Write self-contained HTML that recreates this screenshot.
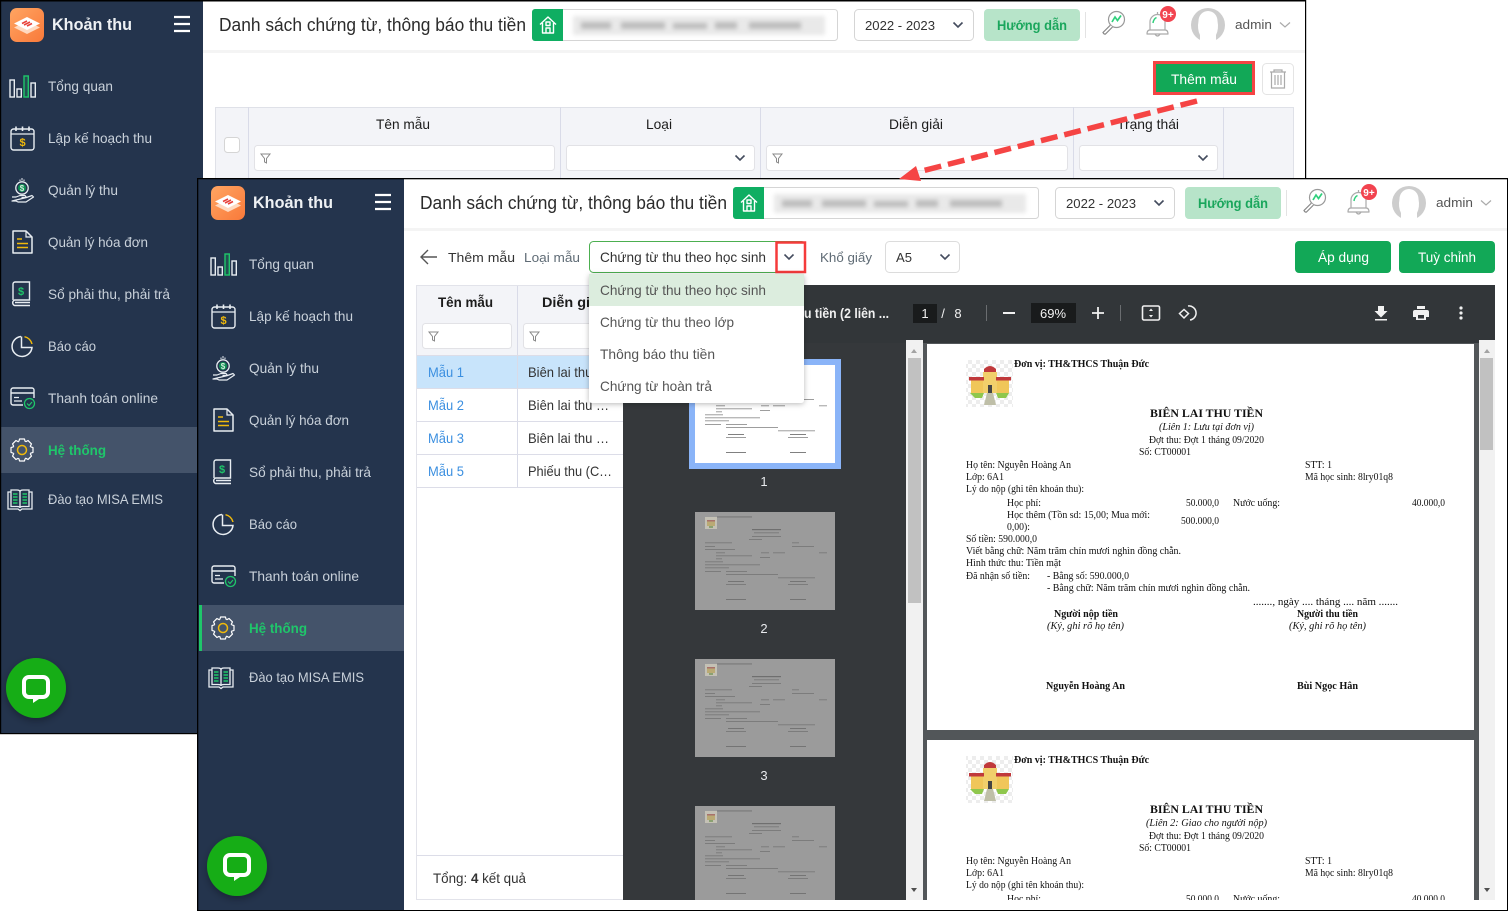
<!DOCTYPE html>
<html lang="vi"><head><meta charset="utf-8"><title>Khoản thu</title>
<style>
html,body{margin:0;padding:0;background:#fff;width:1508px;height:911px;overflow:hidden}
svg{display:block;font-family:"Liberation Sans","Noto Sans CJK SC",sans-serif}
.nav{font-size:14px;fill:#c9d1da}
.act{font-size:14px;fill:#1fc66a;font-weight:bold}
.brand{font-size:17px;fill:#eef1f4;font-weight:bold}
.title{font-size:18px;fill:#2b2b2b}
.t13{font-size:13px;fill:#333}
.t14{font-size:14px;fill:#333}
.th{font-size:14px;fill:#1c1c1c}
.gr{font-size:14px;fill:#1aa65c;font-weight:bold}
.wh{font-size:14px;fill:#fff}
.lk{font-size:14px;fill:#3b8fe0}
.dd{font-size:14px;fill:#555}
.pt{font-size:13px;fill:#f1f1f1}
.d{font-family:"Liberation Serif","Noto Serif CJK SC",serif;font-size:10px;fill:#111}
.db{font-family:"Liberation Serif","Noto Serif CJK SC",serif;font-size:10px;fill:#111;font-weight:bold}
.di{font-family:"Liberation Serif","Noto Serif CJK SC",serif;font-size:10px;fill:#111;font-style:italic}
.dt{font-family:"Liberation Serif","Noto Serif CJK SC",serif;font-size:12px;fill:#111;font-weight:bold}
</style></head><body>
<svg width="1508" height="911" viewBox="0 0 1508 911" xmlns="http://www.w3.org/2000/svg">
<defs>
<filter id="bl" x="-10%" y="-60%" width="120%" height="220%"><feGaussianBlur stdDeviation="3"/></filter>
<filter id="bl2" x="-10%" y="-100%" width="120%" height="300%"><feGaussianBlur stdDeviation="2.200"/></filter>
<filter id="mb" x="-5%" y="-5%" width="110%" height="110%"><feGaussianBlur stdDeviation=".3"/></filter>
<filter id="sh" x="-20%" y="-20%" width="140%" height="150%"><feDropShadow dx="0" dy="1" stdDeviation="3" flood-color="#000" flood-opacity=".28"/></filter>
<filter id="sh2" x="-30%" y="-30%" width="160%" height="160%"><feDropShadow dx="0" dy="3" stdDeviation="4" flood-color="#000" flood-opacity=".3"/></filter>
<linearGradient id="og" x1="0" y1="0" x2="1" y2="1"><stop offset="0" stop-color="#ffa562"/><stop offset="1" stop-color="#f9793a"/></linearGradient>
<clipPath id="cp"><rect x="623" y="340" width="872" height="560"/></clipPath>
<pattern id="chk" width="8" height="8" patternUnits="userSpaceOnUse"><rect width="8" height="8" fill="#fff"/><rect width="4" height="4" fill="#ededed"/><rect x="4" y="4" width="4" height="4" fill="#ededed"/></pattern>

<g id="tooth"><path d="M-3.2 -8.6L-2.4 -11H2.4L3.2 -8.6L3.8 -8.2" fill="none" stroke="#fff" stroke-width="1.2" stroke-linejoin="round"/></g>
<g id="ic-logo"><rect width="34" height="34" rx="7" fill="url(#og)"/><path d="M17 13L30 19.5L17 26L4 19.5Z" fill="#ffd9c0"/><path d="M17 9L30 15.5L17 22L4 15.5Z" fill="#fff"/><path d="M12 15.5L17 13M17 18L22 15.5M14 17L20 14" stroke="#e8413a" stroke-width="1.6" fill="none"/></g>
<g id="ic-burger"><path d="M0 1H16M0 8H16M0 15H16" stroke="#fff" stroke-width="2.2"/></g>
<g id="ic-bars" fill="none" stroke-width="1.4"><rect x="1" y="5" width="4.3" height="17" stroke="#e8edf2"/><rect x="8" y="14" width="4.3" height="8" stroke="#e8edf2"/><rect x="15" y="1" width="4.3" height="21" stroke="#1fc66a" fill="#1fc66a" fill-opacity=".2"/><rect x="22" y="8" width="4.3" height="14" stroke="#e8edf2"/></g>
<g id="ic-cal"><rect x="1" y="3" width="23" height="21" rx="2.5" fill="none" stroke="#e8edf2" stroke-width="1.4"/><path d="M1 8H24" stroke="#e8edf2" stroke-width="1.2"/><path d="M6 0.5V5M12.5 0.5V5M19 0.5V5" stroke="#e8edf2" stroke-width="1.6"/><text x="12.5" y="20" text-anchor="middle" font-size="11" font-weight="bold" fill="#f0b90b">$</text></g>
<g id="ic-hand"><circle cx="11" cy="10" r="6.2" fill="none" stroke="#e8edf2" stroke-width="1.3"/><circle cx="11" cy="10" r="4" fill="#0b8f52"/><text x="11" y="13" text-anchor="middle" font-size="8" font-weight="bold" fill="#cfead9">$</text><path d="M9 1.5V3M13 1.5V3M11 0V2.5" stroke="#e8edf2" stroke-width="1"/><path d="M1 19H5L9 17.5H14L15.5 19.5H10.5M15.5 19.5L21 17.5L22.5 19L15 24H7L5 23H1Z" fill="none" stroke="#e8edf2" stroke-width="1.2" stroke-linejoin="round"/></g>
<g id="ic-doc"><path d="M1 1H14L20 7V23H1Z" fill="none" stroke="#e8edf2" stroke-width="1.5" stroke-linejoin="round"/><path d="M14 1V7H20" fill="none" stroke="#e8edf2" stroke-width="1.2"/><path d="M5 9H10M5 13.5H16M5 17.5H16" stroke="#f0b90b" stroke-width="1.5"/></g>
<g id="ic-book"><path d="M3 19V3A2 2 0 0 1 5 1H19.5V19H4.5A3 3 0 0 0 4.500 24.500H20M5 21.500H20" fill="none" stroke="#e8edf2" stroke-width="1.4"/><text x="11" y="14" text-anchor="middle" font-size="11" font-weight="bold" fill="#1fc66a">$</text></g>
<g id="ic-pie" fill="none" stroke-width="1.5"><path d="M10 1.500A10 10 0 1 0 21 12.500H10.500V1.500" stroke="#e8edf2"/><path d="M13.500 1.700A10 10 0 0 1 21 9" stroke="#f0b90b"/></g>
<g id="ic-card" fill="none"><path d="M13 18H3A2 2 0 0 1 1 16V3A2 2 0 0 1 3 1H22A2 2 0 0 1 24 3V11" stroke="#e8edf2" stroke-width="1.4"/><path d="M1 6H24" stroke="#e8edf2" stroke-width="1.4"/><path d="M4 10.500H9M4 14H12" stroke="#e8edf2" stroke-width="1.2"/><circle cx="19.500" cy="16.500" r="5" stroke="#1fc66a" stroke-width="1.3"/><path d="M17 16.500L19 18.500L22 15" stroke="#1fc66a" stroke-width="1.2"/></g>
<g id="ic-gear"><use href="#tooth"/><use href="#tooth" transform="rotate(45)"/><use href="#tooth" transform="rotate(90)"/><use href="#tooth" transform="rotate(135)"/><use href="#tooth" transform="rotate(180)"/><use href="#tooth" transform="rotate(225)"/><use href="#tooth" transform="rotate(270)"/><use href="#tooth" transform="rotate(315)"/><circle r="4.500" fill="none" stroke="#f0b90b" stroke-width="1.500"/></g>
<g id="ic-open" fill="none"><path d="M3.500 3H1V20H11L13 21.500L15 20H25V3H22.500" stroke="#e8edf2" stroke-width="1.3"/><path d="M4 1H10Q13 1 13 3V19Q13 17.500 10 17.500H4ZM22 1H16Q13 1 13 3V19Q13 17.500 16 17.500H22Z" stroke="#e8edf2" stroke-width="1.3"/><path d="M6 5H10.500M6 8H10.500M6 11H10.500M6 14H10.500M15.500 5H20M15.500 8H20M15.500 11H20M15.500 14H20" stroke="#1fc66a" stroke-width="1.600"/></g>
<g id="ic-chat"><rect x="0" y="0" width="24" height="20" rx="5" fill="none" stroke="#fff" stroke-width="4"/><path d="M9 19L9 26L18 20Z" fill="#fff"/></g>
<g id="ic-home" fill="none" stroke="#fff" stroke-width="1.400" stroke-linejoin="round"><path d="M1 9.500L9 2L17 9.500M3.500 8V18H14.500V8"/><rect x="7" y="7" width="4" height="3.500"/><path d="M7 18V13H11V18"/></g>
<g id="ic-search" fill="none"><circle cx="15.500" cy="9.500" r="8" stroke="#999" stroke-width="1.200"/><path d="M11 12L14 7L16.500 10.500L20 5.500" stroke="#2fd07c" stroke-width="1.700"/><path d="M9.500 15L2 22.500Q3 24.500 4.500 24L11.500 17" fill="#fff" stroke="#888" stroke-width="1.200"/></g>
<g id="ic-bell" fill="none"><path d="M5 20V12A7.500 7.500 0 0 1 20 12V20" stroke="#aaa" stroke-width="1.200"/><path d="M2 24Q2 20 5 20H20Q23 20 23 24H2Z" stroke="#aaa" stroke-width="1.200" stroke-linejoin="round"/><path d="M10 24Q12.500 28 15 24M12.500 4.500V2" stroke="#aaa" stroke-width="1.200"/><path d="M8 13Q8.500 9 11.500 7.500" stroke="#2fd07c" stroke-width="1.500"/></g>
<g id="ic-chev"><path d="M-4.500 -2.500L0 2L4.500 -2.500" fill="none" stroke="#444c5e" stroke-width="1.600"/></g>
<g id="ic-chevl"><path d="M-5 -2.500L0 2L5 -2.500" fill="none" stroke="#aaa" stroke-width="1.200"/></g>
<g id="ic-fun"><path d="M0 0H9L5.500 4.500V9L3.500 8V4.500Z" fill="none" stroke="#888" stroke-width="1"/></g>
<g id="ava"><circle r="17" fill="#cdcdcd"/><path d="M-8 17V10Q-11 4 -9.500 -4A9.500 10 0 0 1 9.500 -4Q11 4 8 10V17Z" fill="#fff"/></g>
<g id="blurbox"><rect x="0" y="0" width="252" height="19" fill="#e9e9e9" filter="url(#bl2)"/><g fill="#bdbdbd" filter="url(#bl2)"><rect x="8" y="6" width="30" height="7"/><rect x="48" y="6" width="44" height="7"/><rect x="100" y="7" width="34" height="6"/><rect x="142" y="6" width="22" height="7"/><rect x="176" y="6" width="52" height="7"/></g></g>

<g id="mini" filter="url(#mb)">
<rect x="10" y="5" width="12" height="12" fill="#eee8d0"/><rect x="12" y="9" width="8" height="5" fill="#d9b94f"/><rect x="12" y="8" width="8" height="1.500" fill="#b54a3c"/><rect x="14" y="14" width="4" height="2" fill="#7aa84a"/>
<g fill="#444"><rect x="22" y="4.500" width="35" height=".9"/><rect x="57" y="17" width="29" height="1.200"/><rect x="59" y="20.500" width="25" height=".7"/><rect x="57" y="24" width="29" height=".7"/><rect x="54" y="27" width="13" height=".7"/>
<rect x="10" y="30.500" width="27" height=".7"/><rect x="97" y="30.500" width="7" height=".7"/><rect x="10" y="34" width="10" height=".7"/><rect x="97" y="34" width="22" height=".7"/><rect x="10" y="37" width="30" height=".7"/>
<rect x="21" y="40.500" width="9" height=".7"/><rect x="66" y="40.500" width="8" height=".7"/><rect x="78" y="40.500" width="12" height=".7"/><rect x="124" y="40.500" width="8" height=".7"/><rect x="21" y="43.500" width="36" height=".7"/><rect x="65" y="45" width="10" height=".7"/><rect x="21" y="46.500" width="6" height=".7"/>
<rect x="10" y="49.500" width="18" height=".7"/><rect x="10" y="52.500" width="55" height=".7"/><rect x="10" y="55.500" width="24" height=".7"/><rect x="10" y="59" width="16" height=".7"/><rect x="31" y="59" width="21" height=".7"/><rect x="31" y="62" width="52" height=".7"/>
<rect x="83" y="65.500" width="37" height=".7"/><rect x="33" y="69" width="16" height=".9"/><rect x="95" y="69" width="16" height=".9"/><rect x="31" y="72" width="20" height=".7"/><rect x="93" y="72" width="20" height=".7"/><rect x="31" y="87" width="20" height=".9"/><rect x="95" y="87" width="16" height=".9"/></g>
</g>
</defs>

<rect width="1508" height="911" fill="#fff"/>

<!-- WINDOW 1 -->
<rect x="1" y="1" width="202" height="732" fill="#24344d"/>
<rect x="203" y="1" width="1102" height="49" fill="#fff"/>
<rect x="203" y="50" width="1102" height="3" fill="#f4f4f4"/>
<use href="#ic-logo" x="10" y="8"/>
<text class="brand" x="52" y="30" textLength="80" lengthAdjust="spacingAndGlyphs">Khoản thu</text>
<use href="#ic-burger" x="174" y="16"/>
<use href="#ic-bars" x="9" y="75"/>
<use href="#ic-cal" x="10" y="126"/>
<use href="#ic-hand" x="11" y="178"/>
<use href="#ic-doc" x="12" y="230"/>
<use href="#ic-book" x="10" y="281"/>
<use href="#ic-pie" x="11" y="335"/>
<use href="#ic-card" x="10" y="387"/>
<rect x="1" y="427" width="196" height="46" fill="#44536a"/>
<use href="#ic-gear" x="22" y="450"/>
<use href="#ic-open" x="7" y="489"/>
<text class="nav" x="48" y="91" textLength="65" lengthAdjust="spacingAndGlyphs">Tổng quan</text>
<text class="nav" x="48" y="143" textLength="104" lengthAdjust="spacingAndGlyphs">Lập kế hoạch thu</text>
<text class="nav" x="48" y="195" textLength="70" lengthAdjust="spacingAndGlyphs">Quản lý thu</text>
<text class="nav" x="48" y="247" textLength="100" lengthAdjust="spacingAndGlyphs">Quản lý hóa đơn</text>
<text class="nav" x="48" y="299" textLength="122" lengthAdjust="spacingAndGlyphs">Sổ phải thu, phải trả</text>
<text class="nav" x="48" y="351" textLength="48" lengthAdjust="spacingAndGlyphs">Báo cáo</text>
<text class="nav" x="48" y="403" textLength="110" lengthAdjust="spacingAndGlyphs">Thanh toán online</text>
<text class="act" x="48" y="455" textLength="58" lengthAdjust="spacingAndGlyphs">Hệ thống</text>
<text class="nav" x="48" y="504" textLength="115" lengthAdjust="spacingAndGlyphs">Đào tạo MISA EMIS</text>
<circle cx="36" cy="688" r="30" fill="#17ad17" filter="url(#sh2)"/>
<use href="#ic-chat" x="24" y="677"/>

<text class="title" x="219" y="31" textLength="307" lengthAdjust="spacingAndGlyphs">Danh sách chứng từ, thông báo thu tiền</text>
<rect x="532.500" y="9.500" width="305" height="31" rx="3" fill="#fff" stroke="#d5d5d5"/>
<path d="M535 9H563V41H535A3 3 0 0 1 532 38V12A3 3 0 0 1 535 9Z" fill="#0fae62"/>
<use href="#ic-home" x="539" y="15"/>
<use href="#blurbox" x="573" y="16"/>
<rect x="854.500" y="9.500" width="119" height="31" rx="4" fill="#fff" stroke="#d5d5d5"/>
<text class="t13" x="865" y="30" textLength="70" lengthAdjust="spacingAndGlyphs">2022 - 2023</text>
<use href="#ic-chev" x="958" y="25"/>
<rect x="984" y="9" width="96" height="32" rx="4" fill="#b7e4c9"/>
<text class="gr" x="997" y="30" textLength="70" lengthAdjust="spacingAndGlyphs">Hướng dẫn</text>
<rect x="1085" y="12" width="1" height="26" fill="#e3e3e3"/>
<use href="#ic-search" x="1101" y="10"/>
<use href="#ic-bell" x="1145" y="10"/>
<circle cx="1168" cy="14" r="8" fill="#f2434f"/><text x="1168" y="18" text-anchor="middle" font-size="10" font-weight="bold" fill="#fff">9+</text>
<use href="#ava" x="1208" y="25"/>
<text class="t13" x="1235" y="29" textLength="37" lengthAdjust="spacingAndGlyphs" style="fill:#555">admin</text>
<use href="#ic-chevl" x="1285" y="25"/>

<rect x="1154.500" y="62.500" width="99" height="31" fill="#12a857" stroke="#f54444" stroke-width="3"/>
<text class="wh" x="1171" y="84" textLength="66" lengthAdjust="spacingAndGlyphs">Thêm mẫu</text>
<rect x="1262.500" y="63.500" width="31" height="31" rx="4" fill="#fff" stroke="#e4e4e4"/>
<g fill="none" stroke="#aaa" stroke-width="1.200"><path d="M1270 72H1286M1274 72V70H1282V72M1271.500 72V88H1284.500V72M1275 75V85M1278 75V85M1281 75V85"/></g>

<rect x="215.500" y="107.500" width="1078" height="72" fill="#f3f4f8" stroke="#dfe1e8"/>
<path d="M248.500 107V178M560.500 107V178M760.500 107V178M1073.500 107V178M1223.500 107V178" stroke="#d9dbe8"/>
<rect x="224.500" y="137.500" width="15" height="15" rx="3" fill="#fff" stroke="#d5d5d5"/>
<text class="th" x="376" y="129" textLength="54" lengthAdjust="spacingAndGlyphs">Tên mẫu</text>
<text class="th" x="646" y="129" textLength="26" lengthAdjust="spacingAndGlyphs">Loại</text>
<text class="th" x="889" y="129" textLength="54" lengthAdjust="spacingAndGlyphs">Diễn giải</text>
<text class="th" x="1117" y="129" textLength="62" lengthAdjust="spacingAndGlyphs">Trạng thái</text>
<g fill="#fff" stroke="#e2e2e6"><rect x="254.500" y="145.500" width="300" height="25" rx="3"/><rect x="566.500" y="145.500" width="188" height="25" rx="3"/><rect x="766.500" y="145.500" width="301" height="25" rx="3"/><rect x="1079.500" y="145.500" width="138" height="25" rx="3"/></g>
<use href="#ic-fun" x="261" y="154"/><use href="#ic-fun" x="773" y="154"/>
<use href="#ic-chev" x="740" y="158"/><use href="#ic-chev" x="1203" y="158"/>

<!-- frame lines window 1 -->
<rect x="0" y="0" width="1306" height="1.500" fill="#000"/>
<rect x="0" y="0" width="1.200" height="734" fill="#000"/>
<rect x="1305" y="0" width="1.200" height="180" fill="#000"/>
<rect x="0" y="733" width="198" height="1.200" fill="#000"/>

<!-- WINDOW 2 -->
<rect x="198" y="179" width="1310" height="732" fill="#fff"/>
<rect x="198" y="179" width="206" height="731" fill="#24344d"/>
<rect x="404" y="228" width="1103" height="3" fill="#f4f4f4"/>
<use href="#ic-logo" x="211" y="186"/>
<text class="brand" x="253" y="208" textLength="80" lengthAdjust="spacingAndGlyphs">Khoản thu</text>
<use href="#ic-burger" x="375" y="194"/>
<use href="#ic-bars" x="210" y="253"/>
<use href="#ic-cal" x="211" y="304"/>
<use href="#ic-hand" x="212" y="356"/>
<use href="#ic-doc" x="213" y="408"/>
<use href="#ic-book" x="211" y="459"/>
<use href="#ic-pie" x="212" y="513"/>
<use href="#ic-card" x="211" y="565"/>
<rect x="199" y="605" width="205" height="46" fill="#44536a"/>
<rect x="199" y="605" width="3" height="46" fill="#1fc66a"/>
<use href="#ic-gear" x="223" y="628"/>
<use href="#ic-open" x="208" y="667"/>
<text class="nav" x="249" y="269" textLength="65" lengthAdjust="spacingAndGlyphs">Tổng quan</text>
<text class="nav" x="249" y="321" textLength="104" lengthAdjust="spacingAndGlyphs">Lập kế hoạch thu</text>
<text class="nav" x="249" y="373" textLength="70" lengthAdjust="spacingAndGlyphs">Quản lý thu</text>
<text class="nav" x="249" y="425" textLength="100" lengthAdjust="spacingAndGlyphs">Quản lý hóa đơn</text>
<text class="nav" x="249" y="477" textLength="122" lengthAdjust="spacingAndGlyphs">Sổ phải thu, phải trả</text>
<text class="nav" x="249" y="529" textLength="48" lengthAdjust="spacingAndGlyphs">Báo cáo</text>
<text class="nav" x="249" y="581" textLength="110" lengthAdjust="spacingAndGlyphs">Thanh toán online</text>
<text class="act" x="249" y="633" textLength="58" lengthAdjust="spacingAndGlyphs">Hệ thống</text>
<text class="nav" x="249" y="682" textLength="115" lengthAdjust="spacingAndGlyphs">Đào tạo MISA EMIS</text>
<circle cx="237" cy="866" r="30" fill="#17ad17" filter="url(#sh2)"/>
<use href="#ic-chat" x="225" y="855"/>

<text class="title" x="420" y="209" textLength="307" lengthAdjust="spacingAndGlyphs">Danh sách chứng từ, thông báo thu tiền</text>
<rect x="733.500" y="187.500" width="305" height="31" rx="3" fill="#fff" stroke="#d5d5d5"/>
<path d="M736 187H764V219H736A3 3 0 0 1 733 216V190A3 3 0 0 1 736 187Z" fill="#0fae62"/>
<use href="#ic-home" x="740" y="193"/>
<use href="#blurbox" x="774" y="194"/>
<rect x="1055.500" y="187.500" width="119" height="31" rx="4" fill="#fff" stroke="#d5d5d5"/>
<text class="t13" x="1066" y="208" textLength="70" lengthAdjust="spacingAndGlyphs">2022 - 2023</text>
<use href="#ic-chev" x="1159" y="203"/>
<rect x="1185" y="187" width="96" height="32" rx="4" fill="#b7e4c9"/>
<text class="gr" x="1198" y="208" textLength="70" lengthAdjust="spacingAndGlyphs">Hướng dẫn</text>
<rect x="1286" y="190" width="1" height="26" fill="#e3e3e3"/>
<use href="#ic-search" x="1302" y="188"/>
<use href="#ic-bell" x="1346" y="188"/>
<circle cx="1369" cy="192" r="8" fill="#f2434f"/><text x="1369" y="196" text-anchor="middle" font-size="10" font-weight="bold" fill="#fff">9+</text>
<use href="#ava" x="1409" y="203"/>
<text class="t13" x="1436" y="207" textLength="37" lengthAdjust="spacingAndGlyphs" style="fill:#555">admin</text>
<use href="#ic-chevl" x="1486" y="203"/>

<path d="M437 257H421M428 250L421 257L428 264" fill="none" stroke="#555" stroke-width="1.400"/>
<text class="t13" x="448" y="262" textLength="67" lengthAdjust="spacingAndGlyphs">Thêm mẫu</text>
<text class="t13" x="524" y="262" textLength="56" lengthAdjust="spacingAndGlyphs" style="fill:#5f6b75">Loại mẫu</text>
<rect x="589.500" y="241.500" width="216" height="31" rx="4" fill="#fff" stroke="#4caf50"/>
<text class="t14" x="600" y="262" textLength="166" lengthAdjust="spacingAndGlyphs">Chứng từ thu theo học sinh</text>
<rect x="776.500" y="242.500" width="28.500" height="29.500" fill="#fff" stroke="#f53b3b" stroke-width="2.500"/>
<use href="#ic-chev" x="789" y="257"/>
<text class="t13" x="820" y="262" textLength="52" lengthAdjust="spacingAndGlyphs" style="fill:#5f6b75">Khổ giấy</text>
<rect x="885.500" y="241.500" width="74" height="31" rx="4" fill="#fff" stroke="#dcdcdc"/>
<text class="t13" x="896" y="262" textLength="16" lengthAdjust="spacingAndGlyphs">A5</text>
<use href="#ic-chev" x="945" y="257"/>
<rect x="1295" y="241" width="96" height="32" rx="4" fill="#12a857"/>
<text class="wh" x="1318" y="262" textLength="51" lengthAdjust="spacingAndGlyphs">Áp dụng</text>
<rect x="1399" y="241" width="96" height="32" rx="4" fill="#12a857"/>
<text class="wh" x="1418" y="262" textLength="58" lengthAdjust="spacingAndGlyphs">Tuỳ chỉnh</text>

<!-- left table -->
<rect x="416.500" y="285.500" width="207" height="614" fill="#fff" stroke="#e2e3ea"/>
<rect x="417" y="286" width="206" height="69" fill="#f3f4f8"/>
<rect x="417" y="355" width="206" height="33" fill="#c8e4fb"/>
<path d="M517.500 286V487" stroke="#d9dbe8"/>
<path d="M417 355.500H623M417 388.500H623M417 421.500H623M417 454.500H623M417 487.500H623M417 855.500H623" stroke="#dcdde8"/>
<text class="th" x="438" y="307" textLength="55" lengthAdjust="spacingAndGlyphs" font-weight="bold">Tên mẫu</text>
<text class="th" x="542" y="307" textLength="60" lengthAdjust="spacingAndGlyphs" font-weight="bold">Diễn giải</text>
<rect x="422.500" y="323.500" width="89" height="25" rx="3" fill="#fff" stroke="#e2e2e6"/>
<rect x="523.500" y="323.500" width="93" height="25" rx="3" fill="#fff" stroke="#e2e2e6"/>
<use href="#ic-fun" x="429" y="332"/><use href="#ic-fun" x="530" y="332"/>
<text class="lk" x="428" y="377" textLength="36" lengthAdjust="spacingAndGlyphs">Mẫu 1</text>
<text class="lk" x="428" y="410" textLength="36" lengthAdjust="spacingAndGlyphs">Mẫu 2</text>
<text class="lk" x="428" y="443" textLength="36" lengthAdjust="spacingAndGlyphs">Mẫu 3</text>
<text class="lk" x="428" y="476" textLength="36" lengthAdjust="spacingAndGlyphs">Mẫu 5</text>
<text class="t14" x="528" y="377" textLength="81" lengthAdjust="spacingAndGlyphs">Biên lai thu …</text>
<text class="t14" x="528" y="410" textLength="81" lengthAdjust="spacingAndGlyphs">Biên lai thu …</text>
<text class="t14" x="528" y="443" textLength="81" lengthAdjust="spacingAndGlyphs">Biên lai thu …</text>
<text class="t14" x="528" y="476" textLength="84" lengthAdjust="spacingAndGlyphs">Phiếu thu (C…</text>
<text class="t14" x="433" y="883" textLength="93" lengthAdjust="spacingAndGlyphs">Tổng: <tspan font-weight="bold">4</tspan> kết quả</text>

<!-- PDF viewer -->
<rect x="623" y="285" width="872" height="615" fill="#525659"/>
<rect x="623" y="340" width="283" height="560" fill="#35383b"/>
<rect x="623" y="285" width="872" height="58" fill="#323639"/>
<text x="804" y="318" font-size="14" font-weight="bold" fill="#f1f1f1" textLength="85" lengthAdjust="spacingAndGlyphs">u tiền (2 liên ...</text>
<rect x="913" y="304" width="24" height="19" fill="#191b1c"/>
<text class="pt" x="925" y="318" text-anchor="middle">1</text>
<text class="pt" x="943" y="318" text-anchor="middle">/</text>
<text class="pt" x="958" y="318" text-anchor="middle">8</text>
<rect x="986" y="305" width="1" height="16" fill="#6a6d70"/>
<rect x="1003" y="312" width="12" height="2" fill="#f1f1f1"/>
<rect x="1031" y="303" width="45" height="20" fill="#191b1c"/>
<text class="pt" x="1053" y="318" text-anchor="middle">69%</text>
<path d="M1092 313H1104M1098 307V319" stroke="#f1f1f1" stroke-width="1.800"/>
<rect x="1120" y="305" width="1" height="16" fill="#6a6d70"/>
<rect x="1142.500" y="306" width="17" height="14" rx="1.500" fill="none" stroke="#f1f1f1" stroke-width="1.600"/>
<path d="M1149 311L1151 308.500L1153 311ZM1149 315L1151 317.500L1153 315Z" fill="#f1f1f1"/>
<g fill="none" stroke="#f1f1f1" stroke-width="1.500"><path d="M1188 306A7 7 0 1 1 1190 320"/><path d="M1184 309.500L1179.500 313.500L1184 318L1188.500 313.500Z"/></g>
<path d="M1378 306H1384V311H1387.500L1381 317.500L1374.500 311H1378ZM1375 319H1387V320.500H1375Z" fill="#f1f1f1"/>
<path d="M1417 306H1425V309H1417ZM1415 310H1427A2 2 0 0 1 1429 312V317H1426V320H1416V317H1413V312A2 2 0 0 1 1415 310Z" fill="#f1f1f1"/>
<rect x="1418" y="315" width="6" height="3.500" fill="#323639"/>
<circle cx="1461" cy="308" r="1.600" fill="#f1f1f1"/><circle cx="1461" cy="313" r="1.600" fill="#f1f1f1"/><circle cx="1461" cy="318" r="1.600" fill="#f1f1f1"/>

<g clip-path="url(#cp)">
<!-- thumbnails -->
<rect x="689" y="359" width="152" height="110" fill="#8ab4f8"/>
<rect x="695" y="365" width="140" height="98" fill="#fff"/>
<use href="#mini" x="695" y="365" opacity=".75"/>
<rect x="695" y="512" width="140" height="98" fill="#9b9b9b"/><use href="#mini" x="695" y="512" opacity=".5"/>
<rect x="695" y="659" width="140" height="98" fill="#9b9b9b"/><use href="#mini" x="695" y="659" opacity=".5"/>
<rect x="695" y="806" width="140" height="98" fill="#9b9b9b"/><use href="#mini" x="695" y="806" opacity=".5"/>
<text x="764" y="486" text-anchor="middle" font-size="13" fill="#e8eaed">1</text>
<text x="764" y="633" text-anchor="middle" font-size="13" fill="#e8eaed">2</text>
<text x="764" y="780" text-anchor="middle" font-size="13" fill="#e8eaed">3</text>
<rect x="906" y="340" width="17" height="560" fill="#f1f1f1"/>
<rect x="908" y="358" width="13" height="245" fill="#c1c1c1"/>
<path d="M911 353L914 349L917 353Z" fill="#a3a3a3"/>
<path d="M911 888L914 892L917 888Z" fill="#505050"/>

<!-- page 1 -->
<rect x="927" y="344" width="547" height="386" fill="#fff"/>
<g>
<rect x="966" y="360" width="47" height="47" fill="url(#chk)"/>
<path d="M984 369Q990 363 996 369V374H984Z" fill="#c0393b"/><rect x="983" y="372" width="14" height="21" fill="#f1cf6b"/><rect x="971" y="380" width="12" height="13" fill="#f0c659"/><rect x="997" y="380" width="12" height="13" fill="#f0c659"/><rect x="969" y="377" width="15" height="3.500" fill="#c0393b"/><rect x="996" y="377" width="15" height="3.500" fill="#c0393b"/><rect x="988" y="385" width="4" height="8" fill="#444"/><path d="M987 393H993L996 405H984Z" fill="#bfbfa8"/><path d="M970 393H984L982 398H975ZM996 393H1009L1006 398H998Z" fill="#8fc74d"/>
<text class="db" x="1014" y="367" textLength="135" lengthAdjust="spacingAndGlyphs">Đơn vị: TH&amp;THCS Thuận Đức</text>
<text class="dt" x="1150" y="417" textLength="113" lengthAdjust="spacingAndGlyphs">BIÊN LAI THU TIỀN</text>
<text class="di" x="1159" y="430" textLength="95" lengthAdjust="spacingAndGlyphs">(Liên 1: Lưu tại đơn vị)</text>
<text class="d" x="1149" y="443" textLength="115" lengthAdjust="spacingAndGlyphs">Đợt thu: Đợt 1 tháng 09/2020</text>
<text class="d" x="1139" y="455" textLength="52" lengthAdjust="spacingAndGlyphs">Số: CT00001</text>
<text class="d" x="966" y="468" textLength="105" lengthAdjust="spacingAndGlyphs">Họ tên: Nguyễn Hoàng An</text>
<text class="d" x="1305" y="468" textLength="27" lengthAdjust="spacingAndGlyphs">STT: 1</text>
<text class="d" x="966" y="480" textLength="38" lengthAdjust="spacingAndGlyphs">Lớp: 6A1</text>
<text class="d" x="1305" y="480" textLength="88" lengthAdjust="spacingAndGlyphs">Mã học sinh: 8lry01q8</text>
<text class="d" x="966" y="492" textLength="118" lengthAdjust="spacingAndGlyphs">Lý do nộp (ghi tên khoản thu):</text>
<text class="d" x="1007" y="506" textLength="34" lengthAdjust="spacingAndGlyphs">Học phí:</text>
<text class="d" x="1186" y="506" textLength="33" lengthAdjust="spacingAndGlyphs">50.000,0</text>
<text class="d" x="1233" y="506" textLength="47" lengthAdjust="spacingAndGlyphs">Nước uống:</text>
<text class="d" x="1412" y="506" textLength="33" lengthAdjust="spacingAndGlyphs">40.000,0</text>
<text class="d" x="1007" y="518" textLength="143" lengthAdjust="spacingAndGlyphs">Học thêm (Tồn sd: 15,00; Mua mới:</text>
<text class="d" x="1181" y="524" textLength="38" lengthAdjust="spacingAndGlyphs">500.000,0</text>
<text class="d" x="1007" y="530" textLength="23" lengthAdjust="spacingAndGlyphs">0,00):</text>
<text class="d" x="966" y="542" textLength="71" lengthAdjust="spacingAndGlyphs">Số tiền: 590.000,0</text>
<text class="d" x="966" y="554" textLength="215" lengthAdjust="spacingAndGlyphs">Viết bằng chữ: Năm trăm chín mươi nghìn đồng chẵn.</text>
<text class="d" x="966" y="566" textLength="95" lengthAdjust="spacingAndGlyphs">Hình thức thu: Tiền mặt</text>
<text class="d" x="966" y="579" textLength="64" lengthAdjust="spacingAndGlyphs">Đã nhận số tiền:</text>
<text class="d" x="1047" y="579" textLength="82" lengthAdjust="spacingAndGlyphs">- Bằng số: 590.000,0</text>
<text class="d" x="1047" y="591" textLength="203" lengthAdjust="spacingAndGlyphs">- Bằng chữ: Năm trăm chín mươi nghìn đồng chẵn.</text>
<text class="d" x="1253" y="605" textLength="145" lengthAdjust="spacingAndGlyphs">......., ngày .... tháng .... năm .......</text>
<text class="db" x="1054" y="617" textLength="64" lengthAdjust="spacingAndGlyphs">Người nộp tiền</text>
<text class="db" x="1297" y="617" textLength="61" lengthAdjust="spacingAndGlyphs">Người thu tiền</text>
<text class="di" x="1047" y="629" textLength="77" lengthAdjust="spacingAndGlyphs">(Ký, ghi rõ họ tên)</text>
<text class="di" x="1289" y="629" textLength="77" lengthAdjust="spacingAndGlyphs">(Ký, ghi rõ họ tên)</text>
<text class="db" x="1046" y="689" textLength="79" lengthAdjust="spacingAndGlyphs">Nguyễn Hoàng An</text>
<text class="db" x="1297" y="689" textLength="61" lengthAdjust="spacingAndGlyphs">Bùi Ngọc Hân</text>
</g>

<!-- page 2 -->
<rect x="927" y="740" width="547" height="170" fill="#fff"/>
<rect x="966" y="756" width="47" height="47" fill="url(#chk)"/>
<path d="M984 765Q990 759 996 765V770H984Z" fill="#c0393b"/><rect x="983" y="768" width="14" height="21" fill="#f1cf6b"/><rect x="971" y="776" width="12" height="13" fill="#f0c659"/><rect x="997" y="776" width="12" height="13" fill="#f0c659"/><rect x="969" y="773" width="15" height="3.500" fill="#c0393b"/><rect x="996" y="773" width="15" height="3.500" fill="#c0393b"/><rect x="988" y="781" width="4" height="8" fill="#444"/><path d="M987 789H993L996 801H984Z" fill="#bfbfa8"/><path d="M970 789H984L982 794H975ZM996 789H1009L1006 794H998Z" fill="#8fc74d"/>
<text class="db" x="1014" y="763" textLength="135" lengthAdjust="spacingAndGlyphs">Đơn vị: TH&amp;THCS Thuận Đức</text>
<text class="dt" x="1150" y="813" textLength="113" lengthAdjust="spacingAndGlyphs">BIÊN LAI THU TIỀN</text>
<text class="di" x="1146" y="826" textLength="121" lengthAdjust="spacingAndGlyphs">(Liên 2: Giao cho người nộp)</text>
<text class="d" x="1149" y="839" textLength="115" lengthAdjust="spacingAndGlyphs">Đợt thu: Đợt 1 tháng 09/2020</text>
<text class="d" x="1139" y="851" textLength="52" lengthAdjust="spacingAndGlyphs">Số: CT00001</text>
<text class="d" x="966" y="864" textLength="105" lengthAdjust="spacingAndGlyphs">Họ tên: Nguyễn Hoàng An</text>
<text class="d" x="1305" y="864" textLength="27" lengthAdjust="spacingAndGlyphs">STT: 1</text>
<text class="d" x="966" y="876" textLength="38" lengthAdjust="spacingAndGlyphs">Lớp: 6A1</text>
<text class="d" x="1305" y="876" textLength="88" lengthAdjust="spacingAndGlyphs">Mã học sinh: 8lry01q8</text>
<text class="d" x="966" y="888" textLength="118" lengthAdjust="spacingAndGlyphs">Lý do nộp (ghi tên khoản thu):</text>
<text class="d" x="1007" y="902" textLength="34" lengthAdjust="spacingAndGlyphs">Học phí:</text>
<text class="d" x="1186" y="902" textLength="33" lengthAdjust="spacingAndGlyphs">50.000,0</text>
<text class="d" x="1233" y="902" textLength="47" lengthAdjust="spacingAndGlyphs">Nước uống:</text>
<text class="d" x="1412" y="902" textLength="33" lengthAdjust="spacingAndGlyphs">40.000,0</text>

<rect x="1479" y="340" width="16" height="560" fill="#f1f1f1"/>
<rect x="1480" y="358" width="13" height="92" fill="#c1c1c1"/>
<path d="M1484 353L1487 349L1490 353Z" fill="#a3a3a3"/>
<path d="M1484 888L1487 892L1490 888Z" fill="#505050"/>
</g>

<!-- dropdown -->
<rect x="589" y="274" width="215" height="129" rx="3" fill="#fff" filter="url(#sh)"/>
<path d="M589 274H804V306H589Z" fill="#dcedde"/>
<text class="dd" x="600" y="295" textLength="166" lengthAdjust="spacingAndGlyphs">Chứng từ thu theo học sinh</text>
<text class="dd" x="600" y="327" textLength="134" lengthAdjust="spacingAndGlyphs">Chứng từ thu theo lớp</text>
<text class="dd" x="600" y="359" textLength="115" lengthAdjust="spacingAndGlyphs">Thông báo thu tiền</text>
<text class="dd" x="600" y="391" textLength="112" lengthAdjust="spacingAndGlyphs">Chứng từ hoàn trả</text>

<!-- frame lines window 2 -->
<rect x="197" y="178" width="1311" height="1.300" fill="#000"/>
<rect x="197" y="178" width="1.300" height="733" fill="#000"/>
<rect x="1507" y="178" width="1" height="733" fill="#000"/>
<rect x="197" y="910" width="1311" height="1" fill="#000"/>

<!-- arrow -->
<path d="M1197 101L918 172" stroke="#f54444" stroke-width="5.500" stroke-dasharray="17 7" fill="none"/>
<path d="M899 179L916 166L921 181Z" fill="#f54444"/>
</svg>
</body></html>
